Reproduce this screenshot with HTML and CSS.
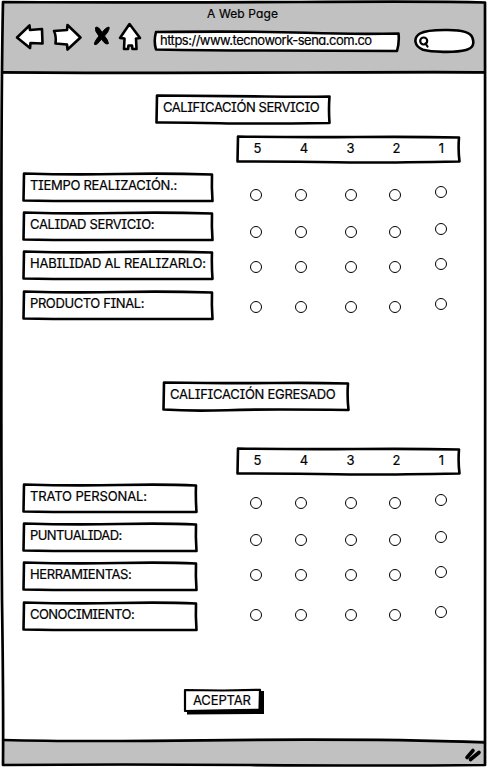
FILE: index.html
```html
<!DOCTYPE html>
<html lang="es">
<head>
<meta charset="utf-8">
<title>A Web Page</title>
<link rel="stylesheet" href="styles.css">
</head>
<body>
<div class="window">
  <header class="bar">
    <h1 class="bar-title"><span class="t-page">A Web Page</span></h1>
    <div class="tools">
      <svg class="nav" width="128" height="34" viewBox="14 20 128 34">
        <path class="icon" d="M17 37.500 L29.500 25.500 L30 30 L42 29 L42.500 43.500 L30.500 43 L30 48 Z"/>
        <path class="icon" d="M54 31 L67 30 L67.500 25 L80.500 37.500 L67.500 49.500 L67 44.500 L55.500 43.500 Q56.500 36 54 31 Z"/>
        <path class="cross" d="M95.500 27.500 Q98 25.500 102 32.500 Q106 27 109 27 Q110 30 104.500 36 Q108 40 108.500 43.500 Q105.500 45.500 101.500 39 Q97 45.500 94.500 44.500 Q94 42 99 36 Q94.500 31 95.500 27.500 Z"/>
        <path class="icon" d="M129.500 24 L140 38 L136 38.500 L136.500 49 L132.500 49 L132 45.500 L128.500 45.500 L128 49 L124 49 L124.500 38.500 L120 38 Z"/>
      </svg>
      <div class="address">
        <svg class="sketch" viewBox="0 0 248 23"><path d="M3 2 Q100 1 153 2.800 T245.500 3.500 Q246.500 12 244 21 Q160 20.500 110 20.500 T3 19.500 Q0.500 11 3 2 Z"/></svg>
        <span class="t-url">https://www.tecnowork-sena.com.co</span>
      </div>
      <svg class="search" width="62" height="26" viewBox="413 28 62 26">
        <path class="icon" d="M420 33.500 C426 30 436 29.800 448 30 C462 30 471 32.500 472.500 38 C474.500 44 473 48 466 50 C455 53 431 52 423 49.800 C414 46 413 38 420 33.500 Z"/>
        <circle class="lens" cx="423.700" cy="41" r="3.500"/><path class="lens" d="M425.500 43.500 L427.500 46.500"/>
      </svg>
    </div>
  </header>

  <main class="page">
    <h2 class="box title-service">
      <svg class="sketch" viewBox="0 0 176 31" preserveAspectRatio="none"><path d="M2 1.500 Q70 2 110 2.500 T174.500 2.500 Q173.500 15 174.500 29 Q100 30 65 29.200 T1.500 28.500 Z"/></svg>
      <span class="t-service">CALIFICACIÓN SERVICIO</span>
    </h2>
    <section class="ratings">
      <div class="labels">
        <div class="box"><svg class="sketch" viewBox="0 0 192 31" preserveAspectRatio="none"><path d="M2 1.500 Q50 3 96 2 T190 2.500 Q189.500 15 190.500 29 Q100 29 65 29 T1.500 28.500 Z"/></svg><span class="t-tiempo">TIEMPO REALIZACIÓN.:</span></div>
        <div class="box"><svg class="sketch" viewBox="0 0 192 31" preserveAspectRatio="none"><path d="M2 1.500 Q50 3 96 2 T190 2.500 Q189.500 15 190.500 29 Q100 29 65 29 T1.500 28.500 Z"/></svg><span class="t-calidad">CALIDAD SERVICIO:</span></div>
        <div class="box"><svg class="sketch" viewBox="0 0 192 31" preserveAspectRatio="none"><path d="M2 1.500 Q50 3 96 2 T190 2.500 Q189.500 15 190.500 29 Q100 29 65 29 T1.500 28.500 Z"/></svg><span class="t-habilidad">HABILIDAD AL REALIZARLO:</span></div>
        <div class="box"><svg class="sketch" viewBox="0 0 192 31" preserveAspectRatio="none"><path d="M2 1.500 Q50 3 96 2 T190 2.500 Q189.500 15 190.500 29 Q100 29 65 29 T1.500 28.500 Z"/></svg><span class="t-producto">PRODUCTO FINAL:</span></div>
      </div>
      <div class="scores">
        <div class="scale">
          <svg class="sketch" viewBox="0 0 225 29" preserveAspectRatio="none"><path d="M2 1.500 Q60 2.500 120 2 T223 2.500 Q222 15 223.500 26.500 Q140 28 100 27.300 T1.500 26.500 Z"/></svg>
          <span>5</span><span>4</span><span>3</span><span>2</span><span>1</span>
        </div>
        <div class="options">
          <input type="radio" name="a1"><input type="radio" name="a1"><input type="radio" name="a1"><input type="radio" name="a1"><input type="radio" name="a1">
          <input type="radio" name="a2"><input type="radio" name="a2"><input type="radio" name="a2"><input type="radio" name="a2"><input type="radio" name="a2">
          <input type="radio" name="a3"><input type="radio" name="a3"><input type="radio" name="a3"><input type="radio" name="a3"><input type="radio" name="a3">
          <input type="radio" name="a4"><input type="radio" name="a4"><input type="radio" name="a4"><input type="radio" name="a4"><input type="radio" name="a4">
        </div>
      </div>
    </section>

    <h2 class="box title-graduate">
      <svg class="sketch" viewBox="0 0 188 31" preserveAspectRatio="none"><path d="M2 1.500 Q70 2.500 110 2 T186 2.500 Q185 15 186.500 29 Q100 28 65 29.200 T1.500 28.500 Z"/></svg>
      <span class="t-egresado">CALIFICACIÓN EGRESADO</span>
    </h2>
    <section class="ratings graduate">
      <div class="labels">
        <div class="box"><svg class="sketch" viewBox="0 0 176 31" preserveAspectRatio="none"><path d="M2 1.500 Q50 3 96 2 T174 2.500 Q173.500 15 174.500 29 Q100 29 65 29 T1.500 28.500 Z"/></svg><span class="t-trato">TRATO PERSONAL:</span></div>
        <div class="box"><svg class="sketch" viewBox="0 0 176 31" preserveAspectRatio="none"><path d="M2 1.500 Q50 3 96 2 T174 2.500 Q173.500 15 174.500 29 Q100 29 65 29 T1.500 28.500 Z"/></svg><span class="t-puntual">PUNTUALIDAD:</span></div>
        <div class="box"><svg class="sketch" viewBox="0 0 176 31" preserveAspectRatio="none"><path d="M2 1.500 Q50 3 96 2 T174 2.500 Q173.500 15 174.500 29 Q100 29 65 29 T1.500 28.500 Z"/></svg><span class="t-herram">HERRAMIENTAS:</span></div>
        <div class="box"><svg class="sketch" viewBox="0 0 176 31" preserveAspectRatio="none"><path d="M2 1.500 Q50 3 96 2 T174 2.500 Q173.500 15 174.500 29 Q100 29 65 29 T1.500 28.500 Z"/></svg><span class="t-conoc">CONOCIMIENTO:</span></div>
      </div>
      <div class="scores">
        <div class="scale">
          <svg class="sketch" viewBox="0 0 225 29" preserveAspectRatio="none"><path d="M2 1.500 Q60 2.500 120 2 T223 2.500 Q222 15 223.500 26.500 Q140 28 100 27.300 T1.500 26.500 Z"/></svg>
          <span>5</span><span>4</span><span>3</span><span>2</span><span>1</span>
        </div>
        <div class="options">
          <input type="radio" name="b1"><input type="radio" name="b1"><input type="radio" name="b1"><input type="radio" name="b1"><input type="radio" name="b1">
          <input type="radio" name="b2"><input type="radio" name="b2"><input type="radio" name="b2"><input type="radio" name="b2"><input type="radio" name="b2">
          <input type="radio" name="b3"><input type="radio" name="b3"><input type="radio" name="b3"><input type="radio" name="b3"><input type="radio" name="b3">
          <input type="radio" name="b4"><input type="radio" name="b4"><input type="radio" name="b4"><input type="radio" name="b4"><input type="radio" name="b4">
        </div>
      </div>
    </section>

    <button class="accept" type="button">
      <svg class="sketch" viewBox="0 0 82 27"><path class="shadow" d="M4 4 L81 3 L81 26 L4 26.500 Z"/><path class="face" d="M2 2 L40 2.500 L77 1.800 L76.500 21.800 L40 22.300 L2 23 Z"/></svg>
      <span class="t-aceptar">ACEPTAR</span>
    </button>
  </main>

  <footer class="status"></footer>

  <svg class="frame" width="487" height="768" viewBox="0 0 487 768">
    <path d="M3 2 Q160 2.800 300 2 T485 2.500 Q485.500 100 485.200 300 T485 765 Q380 766 250 765 T3 765 Q3.500 700 2 600 Q1 450 1.500 300 Q1 100 3 2 Z"/>
    <path d="M3 72.300 Q150 73.300 300 72.500 T485 72.300"/>
    <path d="M3 740 Q60 741.500 150 740.800 Q290 739 400 740.200 Q440 741 485 742.500"/>
    <path class="grip" d="M467 757.500 L473 750.500 M470.500 759.500 L479 752.500"/>
  </svg>
</div>
</body>
</html>
```
FILE: styles.css
```css
* { box-sizing: border-box; }
body {
  margin: 0;
  background: #fff;
  color: #000;
  font: 13px/16px Inter, "Open Sans", sans-serif;
  font-feature-settings: "cv11", "cv08";
  -webkit-text-stroke: 0.2px #000;
}
h1, h2 { margin: 0; font-size: inherit; font-weight: 400; }
span { white-space: nowrap; }

.window { position: relative; width: 487px; height: 768px; display: flex; flex-direction: column; overflow: hidden; }
.frame { position: absolute; inset: 0; pointer-events: none; fill: none; stroke: #000; stroke-width: 2.7; stroke-linejoin: round; }
.frame .grip { stroke-width: 3.6; stroke-linecap: round; }

.bar { height: 72px; margin: 2px 2px 0 2px; background: #c1c1c1; flex: none; }
.bar-title { height: 18px; padding: 4px 0 0 205px; font-size: 12px; }
.tools { display: flex; align-items: flex-start; padding-left: 12px; }
.nav { display: block; flex: none; }
.icon { fill: #fff; stroke: #000; stroke-width: 2.6; stroke-linejoin: round; }
.cross { fill: #000; stroke: #000; stroke-width: 1; stroke-linejoin: round; }
.lens { fill: none; stroke: #000; stroke-width: 2.2; stroke-linecap: round; }
.address { position: relative; width: 248px; height: 23px; margin: 10px 0 0 11px; padding: 2px 0 0 7px; flex: none; }
.search { margin: 8px 0 0 12px; flex: none; }

.sketch { position: absolute; left: 0; top: 0; width: 100%; height: 100%; overflow: visible; }
.sketch path { fill: #fff; stroke: #000; stroke-width: 2.6; stroke-linejoin: round; }
.sketch .shadow { fill: #000; stroke: none; }
.sketch .face { stroke-width: 2.2; }
.sketch ~ span { position: relative; }

.page { flex: 1; display: flex; flex-direction: column; align-items: flex-start; }
.box { position: relative; height: 31px; padding: 5px 0 0 8px; }
.title-service { width: 176px; margin: 20px 0 0 155px; }
.title-graduate { width: 188px; margin: 60px 0 0 162px; }
.ratings { display: flex; margin: 10px 0 0 22px; }
.labels { width: 192px; display: grid; grid-template-rows: 39px 39px 40px 31px; margin: 37px 22px 0 0; }
.scores { width: 225px; }
.scale { position: relative; height: 29px; display: grid; grid-template-columns: 43px 50px 43px 49px 41px; padding-top: 5px; }
.scale span { text-align: center; }
.options { display: grid; grid-template-columns: 45px 50px 44px 46px 12px; grid-template-rows: 37px 35px 40px 12px; padding: 25px 0 0 14px; }
.options input { appearance: none; width: 12px; height: 12px; margin: 0; border: 1.2px solid #000; border-radius: 50%; background: #fff; }
.options input:nth-child(5n) { margin-top: -3px; }
.graduate { margin-top: 35px; }
.graduate .labels { width: 176px; margin: 36px 38px 0 0; }
.graduate .options { padding-top: 21px; }

.accept { position: relative; width: 82px; height: 27px; margin: 56px 0 0 183px; padding: 4px 0 0 10px; border: 0; background: none; font: inherit; text-align: left; color: inherit; font-feature-settings: inherit; display: flex; align-items: flex-start; }
.status { height: 26px; margin: 0 2px 2px; background: #c1c1c1; flex: none; }

/* Tracking per label */
.t-page { letter-spacing: 0.12px; }
.t-url { letter-spacing: -0.5px; }
.t-service { letter-spacing: -0.43px; }
.t-tiempo { letter-spacing: -0.3px; }
.t-calidad { letter-spacing: -0.35px; }
.t-habilidad { letter-spacing: -0.23px; }
.t-producto { letter-spacing: -0.4px; }
.t-egresado { letter-spacing: -0.28px; }
.t-trato { letter-spacing: -0.13px; }
.t-puntual { letter-spacing: -0.58px; }
.t-herram { letter-spacing: -0.4px; }
.t-conoc { letter-spacing: -0.54px; }
.t-aceptar { letter-spacing: -0.15px; }
```
